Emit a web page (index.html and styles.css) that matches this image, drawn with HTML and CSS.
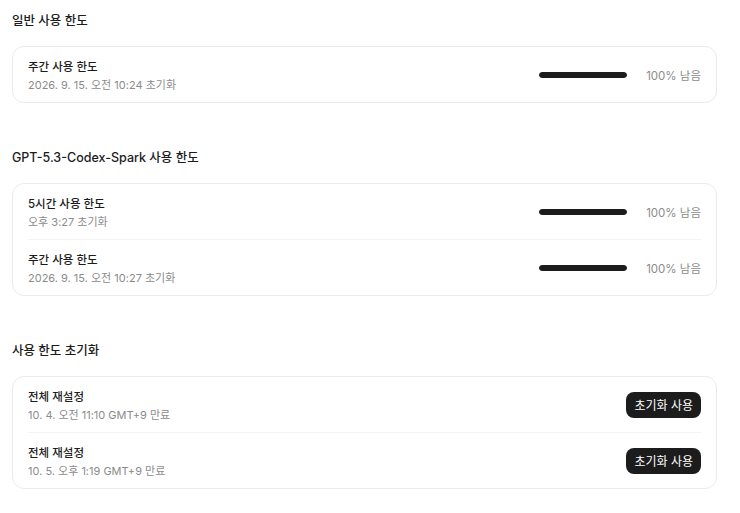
FILE: index.html
```html
<!DOCTYPE html>
<html lang="ko">
<head>
    <meta charset="UTF-8">
    <meta name="viewport" content="width=device-width, initial-scale=1.0">
    <title>사용 한도</title>
    <link rel="stylesheet" href="styles.css">
</head>
<body>

    <div class="pagina">
        <!-- Límite general -->
        <section class="seccion">
            <h2 class="seccion-titulo">일반 사용 한도</h2>
            <div class="tarjeta">
                <div class="fila">
                    <div class="fila-texto">
                        <div class="fila-nombre">주간 사용 한도</div>
                        <div class="fila-detalle">2026. 9. 15. 오전 10:24 초기화</div>
                    </div>
                    <div class="uso">
                        <div class="barra"><div class="barra-relleno" style="width: 100%"></div></div>
                        <span class="uso-texto">100% 남음</span>
                    </div>
                </div>
            </div>
        </section>

        <section class="seccion">
            <h2 class="seccion-titulo">GPT-5.3-Codex-Spark 사용 한도</h2>
            <div class="tarjeta">
                <div class="fila">
                    <div class="fila-texto">
                        <div class="fila-nombre">5시간 사용 한도</div>
                        <div class="fila-detalle">오후 3:27 초기화</div>
                    </div>
                    <div class="uso">
                        <div class="barra"><div class="barra-relleno" style="width: 100%"></div></div>
                        <span class="uso-texto">100% 남음</span>
                    </div>
                </div>
                <div class="fila">
                    <div class="fila-texto">
                        <div class="fila-nombre">주간 사용 한도</div>
                        <div class="fila-detalle">2026. 9. 15. 오전 10:27 초기화</div>
                    </div>
                    <div class="uso">
                        <div class="barra"><div class="barra-relleno" style="width: 100%"></div></div>
                        <span class="uso-texto">100% 남음</span>
                    </div>
                </div>
            </div>
        </section>

        <section class="seccion">
            <h2 class="seccion-titulo">사용 한도 초기화</h2>
            <div class="tarjeta">
                <div class="fila">
                    <div class="fila-texto">
                        <div class="fila-nombre">전체 재설정</div>
                        <div class="fila-detalle">10. 4. 오전 11:10 GMT+9 만료</div>
                    </div>
                    <button class="boton">초기화 사용</button>
                </div>
                <div class="fila">
                    <div class="fila-texto">
                        <div class="fila-nombre">전체 재설정</div>
                        <div class="fila-detalle">10. 5. 오후 1:19 GMT+9 만료</div>
                    </div>
                    <button class="boton">초기화 사용</button>
                </div>
            </div>
        </section>
    </div>

</body>
</html>
```

FILE: styles.css
```css
body {
    font-family: 'Inter', 'Noto Sans CJK KR', sans-serif;
    background-color: #fff;
    color: #1c1c1c;
    margin: 0;
    padding: 0;
}

.pagina {
    width: 705px;
    padding: 11px 0 0 12px;
}

.seccion {
    margin-bottom: 45px;
}

.seccion-titulo {
    font-size: 12.5px;
    font-weight: 500;
    line-height: 20px;
    margin: 0 0 15px 0;
}

.tarjeta {
    border: 1px solid #ebebeb;
    border-radius: 12px;
    background-color: #fff;
}

.fila {
    display: flex;
    align-items: center;
    height: 55px;
    padding: 0 15px;
}

/* separador interior entre filas */
.fila + .fila {
    border-top: 1px solid #f3f3f3;
    margin: 0 15px;
    padding: 0;
}

.fila-texto {
    flex-grow: 1;
    padding-top: 2px;
}

.fila-nombre {
    font-size: 11.5px;
    font-weight: 500;
    line-height: 18px;
}

.fila-detalle {
    font-size: 11px;
    line-height: 18px;
    color: #8b8b8b;
}

.uso {
    display: flex;
    align-items: center;
}

.barra {
    width: 88px;
    height: 6px;
    border-radius: 3px;
    background-color: #e6e6e6;
    margin-right: 18px;
    overflow: hidden;
}

.barra-relleno {
    height: 100%;
    background-color: #1c1c1c;
    border-radius: 3px;
}

.uso-texto {
    font-size: 11.5px;
    color: #8b8b8b;
    width: 56px;
    text-align: right;
}

.boton {
    font-family: inherit;
    font-size: 12px;
    color: #fff;
    background-color: #1c1c1c;
    border: none;
    border-radius: 8px;
    height: 26px;
    padding: 0 8px;
}
```
